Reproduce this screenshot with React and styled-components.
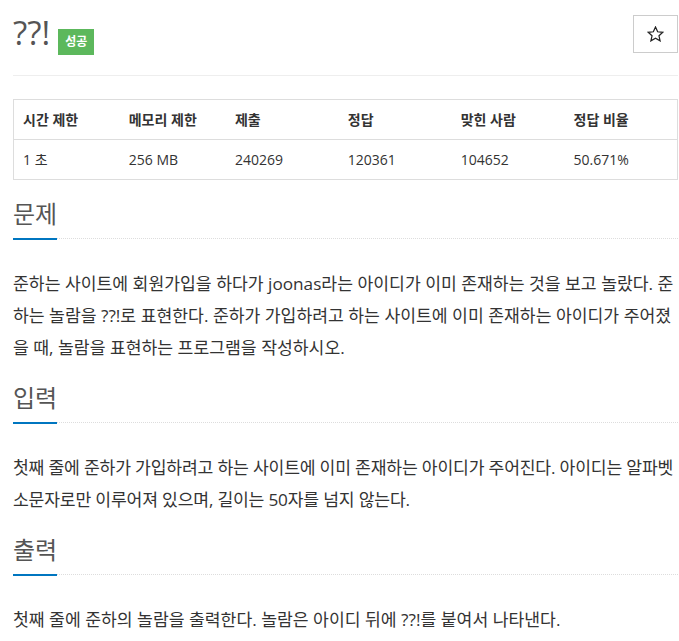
import React from 'react';
import styled, { createGlobalStyle } from 'styled-components';

const GlobalStyle = createGlobalStyle`
    body {
        margin: 0;
        background: #fff;
        font-family: 'Open Sans', 'Noto Sans CJK KR', sans-serif;
        color: #333;
    }
`;

const stats = {
    head: ['시간 제한', '메모리 제한', '제출', '정답', '맞힌 사람', '정답 비율'],
    row: ['1 초', '256 MB', '240269', '120361', '104652', '50.671%'],
    widths: ['16%', '16%', '17%', '17%', '17%', '17%'],
};

// tight: 한글 폭 차이 보정 (입력 문단)
const sections = [
    {
        title: '문제',
        text: '준하는 사이트에 회원가입을 하다가 joonas라는 아이디가 이미 존재하는 것을 보고 놀랐다. 준하는 놀람을 ??!로 표현한다. 준하가 가입하려고 하는 사이트에 이미 존재하는 아이디가 주어졌을 때, 놀람을 표현하는 프로그램을 작성하시오.',
    },
    {
        title: '입력',
        text: '첫째 줄에 준하가 가입하려고 하는 사이트에 이미 존재하는 아이디가 주어진다. 아이디는 알파벳 소문자로만 이루어져 있으며, 길이는 50자를 넘지 않는다.',
        tight: true,
    },
    {
        title: '출력',
        text: '첫째 줄에 준하의 놀람을 출력한다. 놀람은 아이디 뒤에 ??!를 붙여서 나타낸다.',
    },
];

const StarIcon = () => (
    <svg width="17" height="16" viewBox="0 0 24 23" fill="none">
        <path
            d="M12 1.5l3.1 6.8 7.4.8-5.5 5 1.6 7.3L12 17.7l-6.6 3.7L7 14.1l-5.5-5 7.4-.8z"
            stroke="#222"
            strokeWidth="1.8"
            strokeLinejoin="miter"
        />
    </svg>
);

export default function App() {
    return (
        <Page>
            <GlobalStyle />
            <Header>
                <Title>
                    ??!
                    <Label>성공</Label>
                </Title>
                <StarButton type="button" aria-label="즐겨찾기">
                    <StarIcon />
                </StarButton>
            </Header>
            <Rule />
            <StatTable>
                <colgroup>
                    {stats.widths.map((w, i) => (
                        <col key={i} style={{ width: w }} />
                    ))}
                </colgroup>
                <thead>
                    <tr>
                        {stats.head.map((h) => (
                            <Th key={h}>{h}</Th>
                        ))}
                    </tr>
                </thead>
                <tbody>
                    <tr>
                        {stats.row.map((v, i) => (
                            <Td key={i}>{v}</Td>
                        ))}
                    </tr>
                </tbody>
            </StatTable>
            {sections.map((s) => (
                <Section key={s.title}>
                    <Headline>
                        <H2>{s.title}</H2>
                    </Headline>
                    <ProblemText $tight={s.tight}>{s.text}</ProblemText>
                </Section>
            ))}
        </Page>
    );
}

const Page = styled.div`
    padding: 0 1px 24px 13px;
`;

const Header = styled.div`
    display: flex;
    justify-content: space-between;
    align-items: flex-start;
    height: 53px;
    padding-top: 13px;
    box-sizing: border-box;
`;

const Title = styled.h1`
    display: flex;
    align-items: flex-start;
    gap: 8px;
    margin: 0;
    font-size: 33px;
    font-weight: 400;
    line-height: 40px;
    color: #555;
`;

const Label = styled.span`
    display: inline-block;
    margin-top: 16px;
    height: 26px;
    padding: 0 7px;
    background: #5cb85c;
    color: #fff;
    font-size: 12px;
    font-weight: 700;
    line-height: 26px;
`;

const StarButton = styled.button`
    display: flex;
    align-items: center;
    justify-content: center;
    margin-top: 2px;
    width: 45px;
    height: 38px;
    padding: 0;
    background: #fff;
    border: 1px solid #ccc;
    cursor: pointer;
`;

const Rule = styled.hr`
    margin: 22px 0 23px;
    border: 0;
    border-top: 1px solid #eee;
`;

const StatTable = styled.table`
    width: 100%;
    table-layout: fixed;
    border-collapse: collapse;
    border: 1px solid #ddd;
    font-size: 14px;
    margin-bottom: 1px;
`;

const Th = styled.th`
    padding: 8px 9px;
    line-height: 23px;
    text-align: left;
    font-weight: 700;
    color: #333;
`;

const Td = styled.td`
    padding: 8px 9px;
    line-height: 23px;
    border-top: 1px solid #ddd;
    color: #333;
`;

const Section = styled.section`
    margin-top: 20px;
`;

const Headline = styled.div`
    border-bottom: 1px dotted #ddd;
`;

const H2 = styled.h2`
    display: inline-block;
    margin: 0 0 -2px;
    padding-bottom: 11px;
    border-bottom: 2px solid #0076c0;
    font-size: 24px;
    font-weight: 400;
    line-height: 27px;
    color: #555;
`;

const ProblemText = styled.p`
    margin: 29px 0 0;
    font-size: 17.2px;
    line-height: 32px;
    letter-spacing: ${(p) => (p.$tight ? '-0.2px' : '0')};
    color: #333;
`;
